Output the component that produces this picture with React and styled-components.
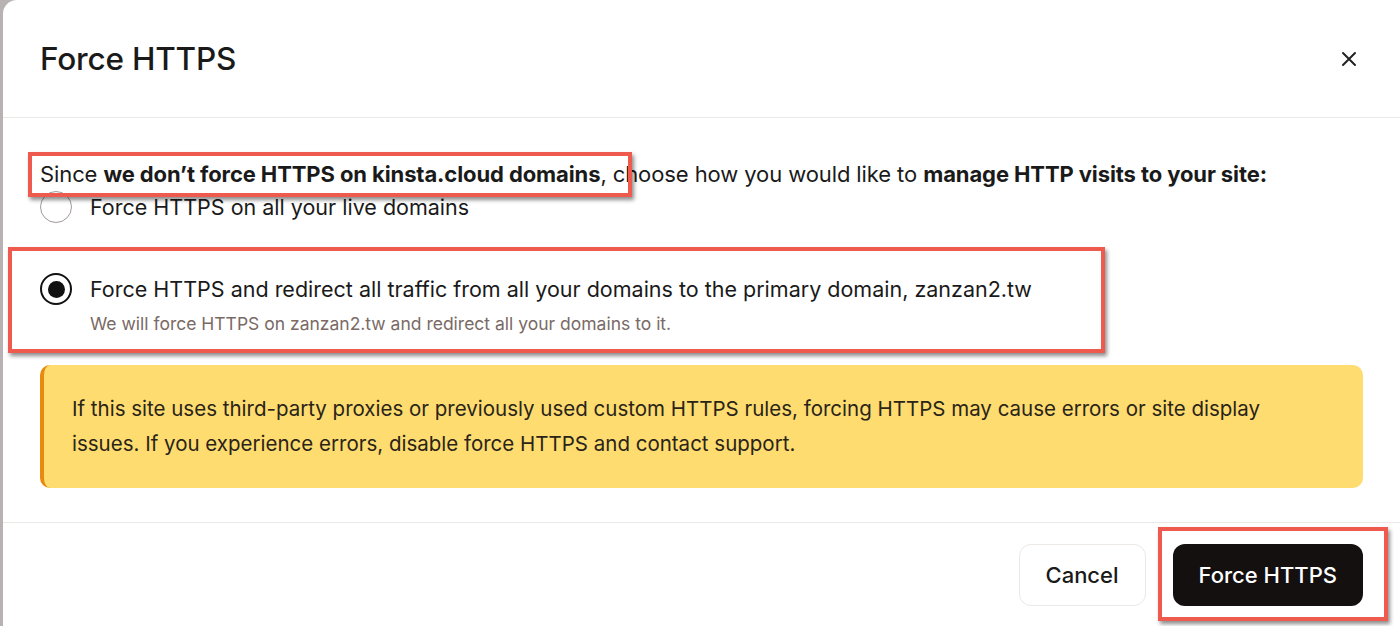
import React from "react";
import styled, { createGlobalStyle } from "styled-components";

const Global = createGlobalStyle`
  html,body{margin:0;padding:0;background:#b9b2b2;}
  body{font-family:Inter,"Noto Sans",sans-serif;color:#1a1a1a;}
`;
const Modal = styled.div`
  position:relative;margin-left:3px;width:1397px;height:626px;background:#fff;
  border-top-left-radius:14px;display:flex;flex-direction:column;box-sizing:border-box;
`;
const Header = styled.div`
  height:118px;display:flex;align-items:center;justify-content:space-between;
  padding:0 42px 0 37px;border-bottom:1px solid #ece8e6;box-sizing:border-box;
`;
const Title = styled.h1`margin:0;font-size:31.5px;font-weight:500;letter-spacing:-0.2px;`;
const Close = styled.button`border:0;background:none;padding:0;display:flex;cursor:pointer;`;
const Body = styled.div`
  flex:1;padding:41px 37px 0 37px;display:flex;flex-direction:column;
  border-bottom:1px solid #ece8e6;
`;
const Lead = styled.p`margin:0;font-size:22px;line-height:30px;letter-spacing:-0.1px;b{font-weight:700;}`;
const Option = styled.label`
  display:flex;gap:18px;align-items:flex-start;margin-top:${p=>p.$mt}px;
`;
const Radio = styled.span`
  width:32px;height:32px;border-radius:50%;box-sizing:border-box;flex:none;
  border:${p=>p.$on?"2px solid #111":"1.5px solid #a39a98"};
  display:flex;align-items:center;justify-content:center;margin-top:-2px;
  &::after{content:"";width:17px;height:17px;border-radius:50%;background:#111;display:${p=>p.$on?"block":"none"};}
`;
const OptText = styled.div`display:flex;flex-direction:column;gap:10px;`;
const OptLabel = styled.span`font-size:21.5px;line-height:28px;`;
const OptHint = styled.span`font-size:17.5px;line-height:22px;color:#7a6a66;`;
const Alert = styled.div`
  margin-top:30px;background:#fedc70;border-left:4px solid #e68a10;
  border-radius:10px;padding:26px 30px 27px 28px;font-size:20.5px;line-height:35px;color:#2a2418;
`;
const Footer = styled.div`
  height:103px;display:flex;align-items:center;justify-content:flex-end;gap:27px;padding:0 37px 0 0;
`;
const Btn = styled.button`
  height:62px;border-radius:12px;font-family:inherit;font-size:22px;font-weight:500;padding:0 26px;
  ${p=>p.$primary?"background:#141010;color:#fff;border:0;":"background:#fff;color:#1a1a1a;border:1px solid #ece8e6;"}
`;
const Mark = styled.div`
  position:absolute;border:4px solid #ee5a4e;box-shadow:2px 3px 4px rgba(0,0,0,0.45);pointer-events:none;
  left:${p=>p.$x}px;top:${p=>p.$y}px;width:${p=>p.$w}px;height:${p=>p.$h}px;box-sizing:border-box;
`;

export default function App(){
  return (<><Global/>
    <Modal>
      <Header><Title>Force HTTPS</Title>
        <Close><svg width="18" height="18" viewBox="0 0 18 18" stroke="#222" strokeWidth="2" strokeLinecap="round"><path d="M3 3l12 12M15 3L3 15"/></svg></Close>
      </Header>
      <Body>
        <Lead>Since <b>we don’t force HTTPS on kinsta.cloud domains</b>, choose how you would like to <b>manage HTTP visits to your site:</b></Lead>
        <Option $mt={4}><Radio/><OptText><OptLabel>Force HTTPS on all your live domains</OptLabel></OptText></Option>
        <Option $mt={52}><Radio $on/><OptText><OptLabel>Force HTTPS and redirect all traffic from all your domains to the primary domain, zanzan2.tw</OptLabel><OptHint>We will force HTTPS on zanzan2.tw and redirect all your domains to it.</OptHint></OptText></Option>
        <Alert>If this site uses third-party proxies or previously used custom HTTPS rules, forcing HTTPS may cause errors or site display issues. If you experience errors, disable force HTTPS and contact support.</Alert>
      </Body>
      <Footer><Btn>Cancel</Btn><Btn $primary>Force HTTPS</Btn></Footer>
      <Mark $x={25} $y={152} $w={604} $h={45}/>
      <Mark $x={5} $y={247} $w={1097} $h={106}/>
      <Mark $x={1155} $y={527} $w={230} $h={94}/>
    </Modal></>);
}
